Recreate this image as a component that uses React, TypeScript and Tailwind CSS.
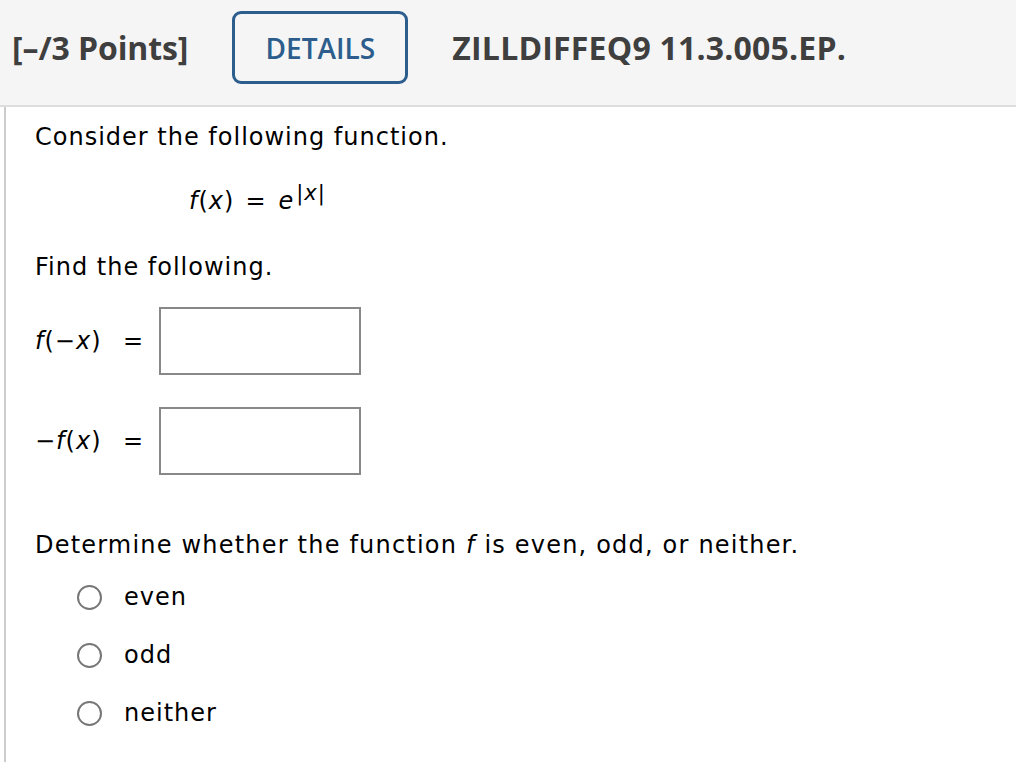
import React from 'react'

const body = { fontFamily: '"DejaVu Sans", Verdana, sans-serif' }

const AnswerRow = ({ label }: { label: React.ReactNode }) => {
  return (
    <div className="flex items-center h-[68px]">
      <div className="w-[88px] whitespace-nowrap">{label}</div>
      <div className="w-[36px]">=</div>
      <div className="w-[202px] h-[68px] border-2 border-[#888888] bg-white" />
    </div>
  )
}

const Choice = ({ text }: { text: string }) => {
  return (
    <div className="flex items-center h-[58px] pl-[42px]">
      <span className="w-[25px] h-[25px] rounded-full border-2 border-[#777777] bg-white" />
      <span className="ml-[22px]">{text}</span>
    </div>
  )
}

const App = () => {
  return (
    <div className="w-[1016px] h-[762px] bg-white overflow-hidden">
      <header
        className="h-[107px] bg-[#f5f5f5] border-b-2 border-[#dddddd] flex items-center pl-[12px] pb-[10px]"
        style={{ fontFamily: '"Open Sans", sans-serif' }}
      >
        <span className="text-[32px] font-bold text-[#3f3f3f] tracking-[-0.1px]">[–/3 Points]</span>
        <div className="ml-[44px] w-[176px] h-[73px] rounded-[9px] border-[3px] border-[#2c5d8c] flex items-center justify-center">
          <span className="text-[28px] font-semibold text-[#2c5d8c]">DETAILS</span>
        </div>
        <span className="ml-[44px] text-[32px] font-bold text-[#3f3f3f] tracking-[0.2px]">ZILLDIFFEQ9 11.3.005.EP.</span>
      </header>
      <main
        className="border-l-2 border-[#cccccc] ml-[4px] h-[655px] pl-[29px] pt-[12px] text-[24px] text-black tracking-[1px]"
        style={body}
      >
        <p className="leading-[36px]">Consider the following function.</p>
        <p className="mt-[28px] pl-[154px] leading-[36px] flex items-baseline">
          <span><i>f</i>(<i>x</i>)</span>
          <span className="ml-[11px]">=</span>
          <i className="ml-[12px]">e</i>
          <sup className="ml-[2px] text-[21px] relative -top-[9px]">|<i>x</i>|</sup>
        </p>
        <p className="mt-[30px] leading-[36px]">Find the following.</p>
        <div className="mt-[22px] flex flex-col gap-[32px]">
          <AnswerRow label={<span><i>f</i>(−<i>x</i>)</span>} />
          <AnswerRow label={<span>−<i>f</i>(<i>x</i>)</span>} />
        </div>
        <p className="mt-[52px] leading-[36px] tracking-[1.2px]">
          Determine whether the function <i>f</i> is even, odd, or neither.
        </p>
        <div className="mt-[5px] flex flex-col">
          <Choice text="even" />
          <Choice text="odd" />
          <Choice text="neither" />
        </div>
      </main>
    </div>
  )
}

export default App
